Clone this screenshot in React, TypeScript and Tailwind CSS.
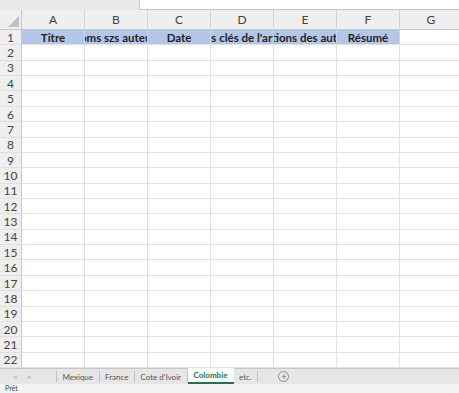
const cols = ["A", "B", "C", "D", "E", "F", "G"];
const headers = ["Titre", "Noms szs auteurs", "Date", "Mots clés de l'article", "Citations des auteurs", "Résumé"];
const rows = Array.from({ length: 22 }, (_, i) => i + 1);
const tabs = ["Mexique", "France", "Cote d'Ivoir", "Colombie", "etc."];

export default function App() {
  return (
    <div className="flex h-[393px] w-[459px] flex-col overflow-hidden bg-white font-['Lato',sans-serif] text-[#333]">
      {/* formula bar remnant */}
      <div className="flex h-[10px] shrink-0 bg-[#e9e9e9]">
        <div className="ml-[139px] flex-1 border-b border-l border-[#c6c6c6] bg-white" />
      </div>

      {/* column headers */}
      <div className="flex h-[20px] shrink-0 border-b border-[#c8c8c8] bg-[#efefef]">
        <div className="relative w-[22px] shrink-0 border-r border-[#c8c8c8]">
          <svg className="absolute bottom-[2px] right-[2px]" width="11" height="11" viewBox="0 0 11 11">
            <polygon points="11,0 11,11 0,11" fill="#c1c1c1" />
          </svg>
        </div>
        {cols.map((c) => (
          <div
            key={c}
            className="flex w-[63px] shrink-0 items-center justify-center border-r border-[#d4d4d4] pt-[1px] text-[12px] text-[#444]"
          >
            {c}
          </div>
        ))}
      </div>

      {/* grid */}
      <div className="grid min-h-0 flex-1 grid-rows-[repeat(22,minmax(0,1fr))]">
        {rows.map((r) => (
          <div key={r} className="flex border-b border-[#e0e0e0]">
            <div className="flex w-[22px] shrink-0 items-center justify-center border-r border-[#c8c8c8] bg-[#efefef] pt-[1px] text-[12px] text-[#444]">
              {r}
            </div>
            {cols.map((c, i) => {
              const filled = r === 1 && i < headers.length;
              return (
                <div
                  key={c}
                  className={
                    filled
                      ? "flex w-[63px] shrink-0 items-center justify-center overflow-hidden whitespace-nowrap border-r border-[#c8d4ea] bg-[#b4c6e7] pt-[1px] text-[11.5px] font-bold text-[#1f1f1f]"
                      : "w-[63px] shrink-0 border-r border-[#e0e0e0]"
                  }
                >
                  {filled && <span className="shrink-0">{headers[i]}</span>}
                </div>
              );
            })}
          </div>
        ))}
      </div>

      {/* sheet tabs */}
      <div className="flex h-[16px] shrink-0 items-stretch border-t border-[#c6c6c6] bg-[#e6e6e6] text-[8px] text-[#555]">
        <div className="flex w-[56px] items-center gap-[11px] pl-[13px] text-[7px] text-[#bdbdbd]">
          <span>◂</span>
          <span>▸</span>
        </div>
        <div className="my-[2px] w-px bg-[#c0c0c0]" />
        {tabs.map((t) => {
          const active = t === "Colombie";
          return active ? (
            <div
              key={t}
              className="-mt-px flex w-[46px] items-center justify-center border-b-2 border-[#217346] bg-white font-bold text-[#217346]"
            >
              {t}
            </div>
          ) : (
            <div key={t} className="flex items-center">
              <div className="flex items-center px-[5.5px]">{t}</div>
              <div className="my-[2px] h-[11px] w-px bg-[#c0c0c0]" />
            </div>
          );
        })}
        <div className="ml-[20px] flex items-center">
          <div className="flex h-[11px] w-[11px] items-center justify-center rounded-full border border-[#8a8a8a] text-[9px] leading-none text-[#666]">
            +
          </div>
        </div>
      </div>

      {/* status bar */}
      <div className="flex h-[9px] shrink-0 items-center bg-[#f3f3f3] pl-[5px] text-[7px] text-[#444]">Prêt</div>
    </div>
  );
}
